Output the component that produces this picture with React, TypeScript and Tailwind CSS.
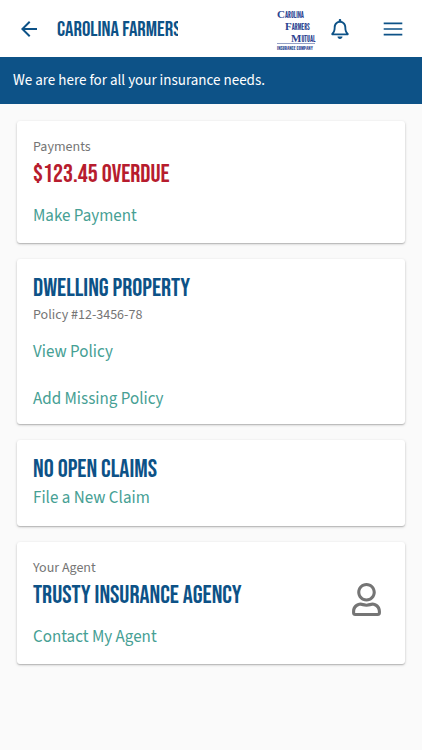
import type { ReactNode } from "react";
import { FaRegBell, FaRegUser } from "react-icons/fa";
import { MdArrowBack } from "react-icons/md";
import clsx from "clsx";

const display = "font-['Bebas_Neue','Roboto_Condensed',sans-serif] font-normal uppercase whitespace-nowrap";

function Card({ children, className }: { children: ReactNode; className?: string }) {
  return (
    <section
      className={clsx(
        "rounded-[3px] bg-white px-4 shadow-[0_1px_3px_rgba(0,0,0,0.2),0_1px_1px_rgba(0,0,0,0.14)]",
        className
      )}
    >
      {children}
    </section>
  );
}

function Title({ children, overdue }: { children: ReactNode; overdue?: boolean }) {
  return (
    <h2 className={clsx(display, "pt-1 text-[25px] leading-7", overdue ? "text-[#b71c2e]" : "text-[#0d5287]")}>
      {children}
    </h2>
  );
}

function Caption({ children }: { children: ReactNode }) {
  return <p className="text-sm leading-5 text-[#757575]">{children}</p>;
}

function Action({ children }: { children: ReactNode }) {
  return (
    <a href="#" className="block w-fit text-[17px] leading-6 text-[#46a094]">
      {children}
    </a>
  );
}

function Logo() {
  return (
    <svg
      viewBox="0 0 40 44"
      className="h-11 w-10 shrink-0 fill-[#2b4390] font-['League_Gothic','Roboto_Condensed',sans-serif]"
      role="img"
      aria-label="Carolina Farmers Mutual Insurance Company"
    >
      <text x="1" y="11" fontSize="8">
        <tspan fontSize="11" className="font-['Liberation_Serif',serif] font-bold">C</tspan>AROLINA
      </text>
      <text x="9" y="23" fontSize="8">
        <tspan fontSize="11" className="font-['Liberation_Serif',serif] font-bold">F</tspan>ARMERS
      </text>
      <text x="15" y="35" fontSize="8">
        <tspan fontSize="11" className="font-['Liberation_Serif',serif] font-bold">M</tspan>UTUAL
      </text>
      <rect x="1" y="36" width="38" height="1" opacity="0.5" />
      <text x="1" y="43" fontSize="6">INSURANCE COMPANY</text>
    </svg>
  );
}

export default function App() {
  return (
    <div className="min-h-screen bg-[#fafafa] font-['Source_Sans_Pro','Source_Sans_3','Noto_Sans_CJK_SC',sans-serif]">
      <header className="flex h-[57px] items-center bg-white pr-[17px] pl-[17px] text-[#0d5287]">
        <button type="button" aria-label="Back">
          <MdArrowBack className="size-6" />
        </button>
        <h1 className={clsx(display, "ml-4 w-[121px] overflow-hidden pt-0.5 text-[21px] leading-8")}>
          Carolina Farmers Mutual
        </h1>
        <div className="ml-auto flex items-center">
          <Logo />
          <button type="button" aria-label="Notifications" className="ml-[14px]">
            <FaRegBell className="size-5" />
          </button>
          <button type="button" aria-label="Menu" className="ml-[31px]">
            <svg viewBox="0 0 24 24" className="size-6" stroke="currentColor" strokeWidth="1.7">
              <path d="M2.7 6.3h18.6M2.7 12h18.6M2.7 17.6h18.6" />
            </svg>
          </button>
        </div>
      </header>

      <p className="bg-[#0d5287] px-[13px] py-3 text-[15px] leading-[23px] text-white">
        We are here for all your insurance needs.
      </p>

      <main className="flex flex-col gap-4 px-[17px] py-[17px]">
        <Card className="pt-4 pb-[15px]">
          <Caption>Payments</Caption>
          <Title overdue>$123.45 Overdue</Title>
          <div className="mt-[15px]">
            <Action>Make Payment</Action>
          </div>
        </Card>

        <Card className="flex flex-col pt-3 pb-[13px]">
          <Title>Dwelling Property</Title>
          <div className="mt-0.5">
            <Caption>Policy #12-3456-78</Caption>
          </div>
          <div className="mt-[15px] flex flex-col gap-[23px]">
            <Action>View Policy</Action>
            <Action>Add Missing Policy</Action>
          </div>
        </Card>

        <Card className="flex flex-col gap-0.5 pt-3 pb-4">
          <Title>No Open Claims</Title>
          <Action>File a New Claim</Action>
        </Card>

        <Card className="flex items-center justify-between pt-4 pb-[15px]">
          <div>
            <Caption>Your Agent</Caption>
            <Title>Trusty Insurance Agency</Title>
            <div className="mt-[15px]">
              <Action>Contact My Agent</Action>
            </div>
          </div>
          <FaRegUser className="mr-1.5 mb-2 size-[33px] text-[#757575]" />
        </Card>
      </main>
    </div>
  );
}
